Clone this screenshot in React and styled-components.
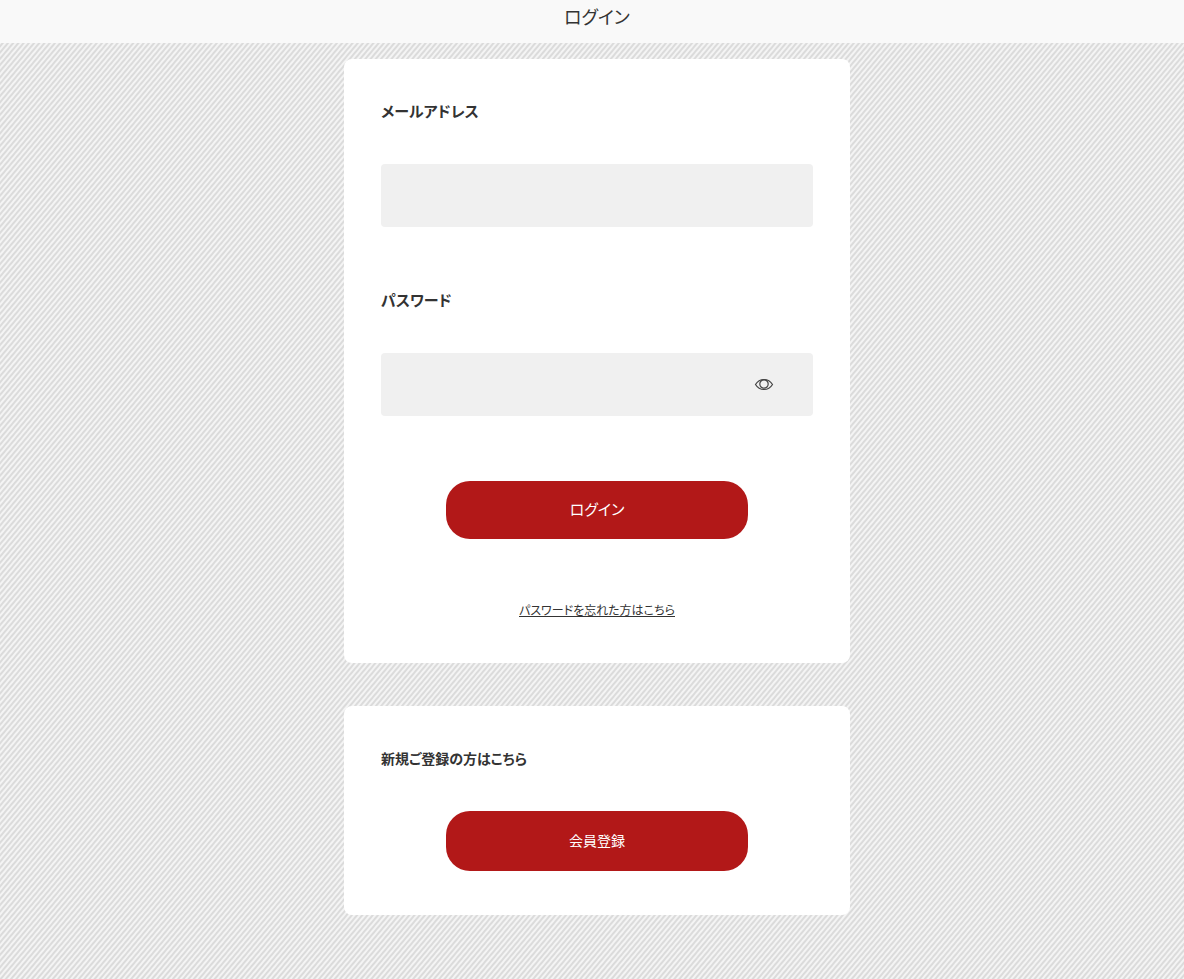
import React, { useState } from "react";
import styled, { createGlobalStyle } from "styled-components";

const GlobalStyle = createGlobalStyle`
  * {
    box-sizing: border-box;
  }
  body {
    margin: 0;
    color: #333;
    font-family: "Noto Sans CJK JP", sans-serif;
    font-feature-settings: "palt";
    background: repeating-linear-gradient(
      -50deg,
      #f4f4f4 0,
      #f4f4f4 1px,
      #dbdbdb 2px,
      #dbdbdb 3px,
      #f4f4f4 4px
    );
  }
  #root {
    min-height: 100vh;
  }
`;

const Header = styled.header`
  display: flex;
  justify-content: center;
  height: 43px;
  padding: 4px 0 0 10px;
  background: #f9f9f9;
`;

const Title = styled.h1`
  margin: 0;
  font-size: 18px;
  font-weight: 400;
  line-height: 24px;
`;

const Main = styled.main`
  display: flex;
  flex-direction: column;
  align-items: center;
  gap: 43px;
  padding: 16px 0 64px 10px;
`;

const Card = styled.section`
  width: 100%;
  max-width: 506px;
  padding: 40px 37px ${({ $bottom }) => $bottom};
  border-radius: 8px;
  background: #fff;
`;

const Form = styled.form`
  display: flex;
  flex-direction: column;
  align-items: center;
`;

const Field = styled.div`
  width: 100%;
  margin-bottom: ${({ $last }) => ($last ? "65px" : "61px")};
`;

const Label = styled.label`
  display: block;
  margin-bottom: 41px;
  font-size: 15px;
  font-weight: 700;
  line-height: 24px;
`;

const Heading = styled.h2`
  margin: 0 0 41px;
  font-size: 14px;
  font-weight: 700;
  line-height: 24px;
`;

const InputBox = styled.div`
  display: flex;
  align-items: center;
  height: 63px;
  padding-right: 39px;
  border-radius: 4px;
  background: #f0f0f0;
`;

const Input = styled.input`
  flex: 1;
  min-width: 0;
  height: 100%;
  padding: 0 16px;
  border: 0;
  background: transparent;
  color: #333;
  font: inherit;
  font-size: 15px;
`;

const EyeButton = styled.button`
  display: flex;
  padding: 0;
  border: 0;
  background: none;
  color: #444;
  cursor: pointer;
`;

const Button = styled.button`
  display: block;
  width: 70%;
  height: ${({ $tall }) => ($tall ? "60px" : "58px")};
  margin: 0 auto;
  padding: 0 0 ${({ $tall }) => ($tall ? "2px" : "4px")};
  border: 0;
  border-radius: 24px;
  background: #b21818;
  color: #fff;
  font: inherit;
  font-size: ${({ $tall }) => ($tall ? "14px" : "15px")};
  cursor: pointer;
`;

const ForgotLink = styled.a`
  margin-top: 59px;
  color: #333;
  font-size: 12px;
  line-height: 24px;
`;

const EyeIcon = () => (
  <svg width="20" height="14" viewBox="0 0 20 14" fill="none" stroke="currentColor" aria-hidden="true">
    <path d="M1.5 6.5C3.5 3.2 6.5 1.5 10 1.5S16.5 3.2 18.5 6.5C16.5 9.8 13.5 11.5 10 11.5S3.5 9.8 1.5 6.5Z" strokeWidth="1.2" />
    <circle cx="10" cy="6" r="4.2" strokeWidth="1.2" />
  </svg>
);

const App = () => {
  const [visible, setVisible] = useState(false);

  return (
    <>
      <GlobalStyle />
      <Header>
        <Title>ログイン</Title>
      </Header>
      <Main>
        <Card $bottom="41px">
          <Form onSubmit={(e) => e.preventDefault()}>
            <Field>
              <Label htmlFor="email">メールアドレス</Label>
              <InputBox>
                <Input id="email" type="email" />
              </InputBox>
            </Field>
            <Field $last>
              <Label htmlFor="password">パスワード</Label>
              <InputBox>
                <Input id="password" type={visible ? "text" : "password"} />
                <EyeButton
                  type="button"
                  aria-label="パスワードを表示"
                  aria-pressed={visible}
                  onClick={() => setVisible(!visible)}
                >
                  <EyeIcon />
                </EyeButton>
              </InputBox>
            </Field>
            <Button type="submit">ログイン</Button>
            <ForgotLink href="#forgot">パスワードを忘れた方はこちら</ForgotLink>
          </Form>
        </Card>
        <Card $bottom="44px">
          <Heading>新規ご登録の方はこちら</Heading>
          <Button type="button" $tall>会員登録</Button>
        </Card>
      </Main>
    </>
  );
};

export default App;
